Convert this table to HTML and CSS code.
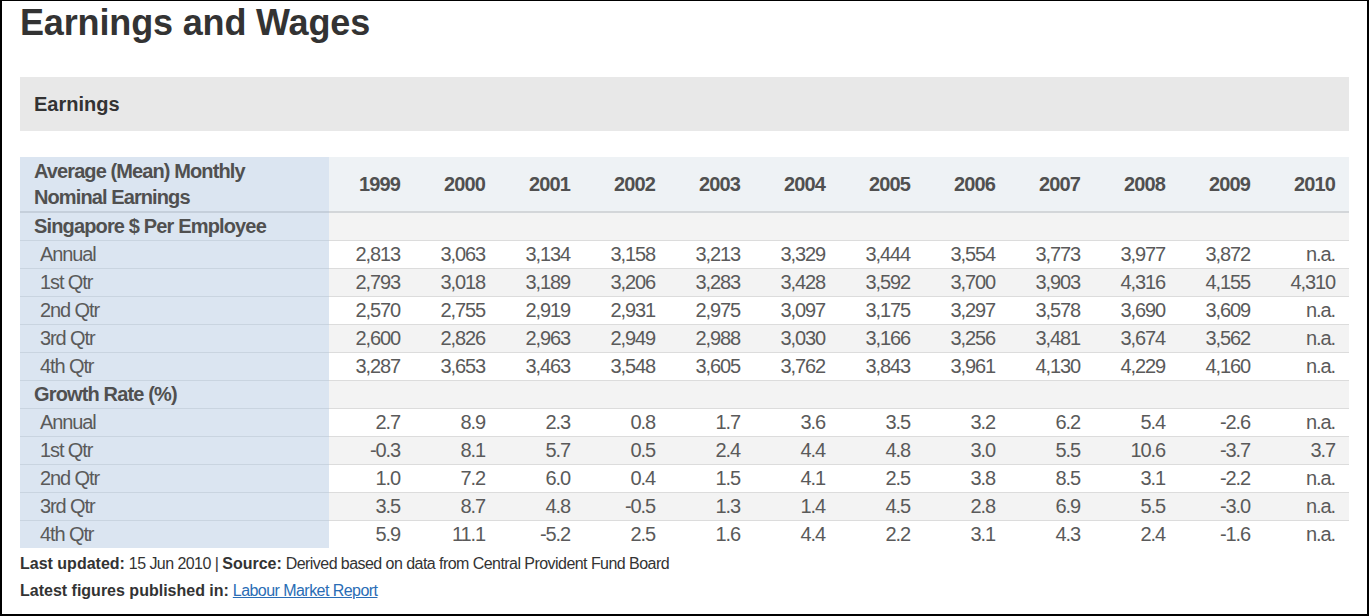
FILE: index.html
```html
<!DOCTYPE html>
<html lang="en">
<head>
<meta charset="utf-8">
<title>Earnings and Wages</title>
<link rel="stylesheet" href="styles.css">
</head>
<body>
<div class="frame">
  <h1 class="title">Earnings and Wages</h1>
  <div class="bar">Earnings</div>
  <table class="data">
    <thead>
      <tr>
        <th class="lab">Average (Mean) Monthly<br>Nominal Earnings</th>
        <th>1999</th><th>2000</th><th>2001</th><th>2002</th><th>2003</th><th>2004</th>
        <th>2005</th><th>2006</th><th>2007</th><th>2008</th><th>2009</th><th>2010</th>
      </tr>
    </thead>
    <tbody>
      <tr class="alt group"><td class="lab">Singapore $ Per Employee</td><td></td><td></td><td></td><td></td><td></td><td></td><td></td><td></td><td></td><td></td><td></td><td></td></tr>
      <tr><td class="lab sub">Annual</td><td>2,813</td><td>3,063</td><td>3,134</td><td>3,158</td><td>3,213</td><td>3,329</td><td>3,444</td><td>3,554</td><td>3,773</td><td>3,977</td><td>3,872</td><td>n.a.</td></tr>
      <tr class="alt"><td class="lab sub">1st Qtr</td><td>2,793</td><td>3,018</td><td>3,189</td><td>3,206</td><td>3,283</td><td>3,428</td><td>3,592</td><td>3,700</td><td>3,903</td><td>4,316</td><td>4,155</td><td>4,310</td></tr>
      <tr><td class="lab sub">2nd Qtr</td><td>2,570</td><td>2,755</td><td>2,919</td><td>2,931</td><td>2,975</td><td>3,097</td><td>3,175</td><td>3,297</td><td>3,578</td><td>3,690</td><td>3,609</td><td>n.a.</td></tr>
      <tr class="alt"><td class="lab sub">3rd Qtr</td><td>2,600</td><td>2,826</td><td>2,963</td><td>2,949</td><td>2,988</td><td>3,030</td><td>3,166</td><td>3,256</td><td>3,481</td><td>3,674</td><td>3,562</td><td>n.a.</td></tr>
      <tr><td class="lab sub">4th Qtr</td><td>3,287</td><td>3,653</td><td>3,463</td><td>3,548</td><td>3,605</td><td>3,762</td><td>3,843</td><td>3,961</td><td>4,130</td><td>4,229</td><td>4,160</td><td>n.a.</td></tr>
      <tr class="alt group"><td class="lab">Growth Rate (%)</td><td></td><td></td><td></td><td></td><td></td><td></td><td></td><td></td><td></td><td></td><td></td><td></td></tr>
      <tr><td class="lab sub">Annual</td><td>2.7</td><td>8.9</td><td>2.3</td><td>0.8</td><td>1.7</td><td>3.6</td><td>3.5</td><td>3.2</td><td>6.2</td><td>5.4</td><td>-2.6</td><td>n.a.</td></tr>
      <tr class="alt"><td class="lab sub">1st Qtr</td><td>-0.3</td><td>8.1</td><td>5.7</td><td>0.5</td><td>2.4</td><td>4.4</td><td>4.8</td><td>3.0</td><td>5.5</td><td>10.6</td><td>-3.7</td><td>3.7</td></tr>
      <tr><td class="lab sub">2nd Qtr</td><td>1.0</td><td>7.2</td><td>6.0</td><td>0.4</td><td>1.5</td><td>4.1</td><td>2.5</td><td>3.8</td><td>8.5</td><td>3.1</td><td>-2.2</td><td>n.a.</td></tr>
      <tr class="alt"><td class="lab sub">3rd Qtr</td><td>3.5</td><td>8.7</td><td>4.8</td><td>-0.5</td><td>1.3</td><td>1.4</td><td>4.5</td><td>2.8</td><td>6.9</td><td>5.5</td><td>-3.0</td><td>n.a.</td></tr>
      <tr class="last"><td class="lab sub">4th Qtr</td><td>5.9</td><td>11.1</td><td>-5.2</td><td>2.5</td><td>1.6</td><td>4.4</td><td>2.2</td><td>3.1</td><td>4.3</td><td>2.4</td><td>-1.6</td><td>n.a.</td></tr>
    </tbody>
  </table>
  <p class="note first"><b>Last updated:</b> 15 Jun 2010 | <b>Source:</b> Derived based on data from Central Provident Fund Board</p>
  <p class="note"><b>Latest figures published in:</b> <a href="#">Labour Market Report</a></p>
</div>
</body>
</html>
```
FILE: styles.css
```css
html, body {
  margin: 0;
  padding: 0;
  background: #fff;
}

.frame {
  box-sizing: border-box;
  width: 1369px;
  height: 616px;
  border: 2px solid #000;
  border-top-width: 1px;
  padding: 0 18px;
  font-family: "Liberation Sans", Arial, sans-serif;
  color: #333;
  overflow: hidden;
}

.title {
  margin: 0;
  font-size: 36px;
  line-height: 44px;
  font-weight: 700;
  color: #333;
  letter-spacing: -0.15px;
}

.bar {
  margin-top: 32px;
  height: 54px;
  background: #e8e8e8;
  display: flex;
  align-items: center;
  padding-left: 14px;
  font-size: 20px;
  font-weight: 700;
  color: #333;
}

.data {
  margin-top: 26px;
  width: 1329px;
  border-collapse: separate;
  border-spacing: 0;
  table-layout: fixed;
  font-family: "Liberation Sans", Arial, sans-serif;
  font-size: 20px;
  letter-spacing: -1.1px;
  color: #5a5a5a;
}

.data th,
.data td {
  box-sizing: border-box;
  width: 85px;
  padding: 0 14px 0 0;
  text-align: right;
  vertical-align: middle;
  white-space: nowrap;
}

.data th {
  font-weight: 700;
  letter-spacing: -0.9px;
  color: #505050;
  line-height: 26px;
  padding-top: 1px;
  padding-bottom: 1px;
  background: #eef2f5;
  border-bottom: 2px solid #d3d6d9;
}

.data th.lab {
  width: 309px;
  text-align: left;
  padding-left: 14px;
  background: #dbe5f1;
  border-bottom-color: #c5cfdb;
}

.data td {
  line-height: 27px;
  border-bottom: 1px solid #dcdcdc;
  background: #fff;
}

.data tr.alt td {
  background: #f3f3f3;
}

.data tr td.lab {
  text-align: left;
  padding-left: 14px;
  background: #dbe5f1;
  border-bottom-color: #c9d4e0;
}

.data tr.group td.lab {
  font-weight: 700;
  letter-spacing: -0.85px;
  color: #505050;
}

.data tr td.lab.sub {
  padding-left: 20px;
}

.data tr.last td {
  border-bottom: 0;
}

.note {
  margin: 0;
  line-height: 27px;
  font-size: 16px;
  letter-spacing: -0.55px;
  color: #333;
}

.note.first {
  margin-top: 2px;
}

.note b {
  font-weight: 700;
  letter-spacing: 0;
}

.note a {
  color: #2a6db5;
  text-decoration: underline;
}
```
